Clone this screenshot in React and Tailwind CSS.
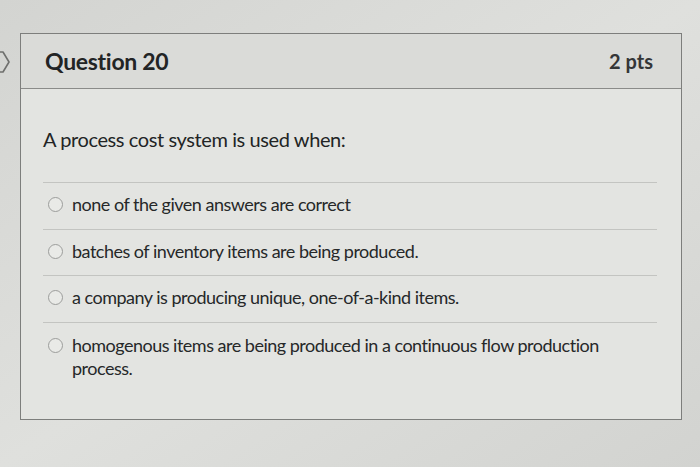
import { useState } from 'react'

const options = [
    'none of the given answers are correct',
    'batches of inventory items are being produced.',
    'a company is producing unique, one-of-a-kind items.',
    'homogenous items are being produced in a continuous flow production process.',
]

const Radio = ({ checked }) => (
    <span className="mt-[4px] h-[15px] w-[15px] shrink-0 rounded-full border-[1.5px] border-[#9c9d9b] bg-[#e9eae7] flex items-center justify-center">
        {checked && <span className="h-[7px] w-[7px] rounded-full bg-[#555]" />}
    </span>
)

const App = () => {
    const [picked, setPicked] = useState(null)

    return (
        <div
            className="h-[467px] w-[700px] overflow-hidden flex items-start pt-[33px] bg-gradient-to-br from-[#d3d4d1] via-[#dfe0dd] to-[#d2d3d0] text-[#222425]"
            style={{ fontFamily: 'Lato, "Open Sans", sans-serif' }}
        >
            {/* prev arrow, cut off at the left */}
            <svg className="mt-[17px] shrink-0" width="20" height="24" viewBox="0 0 20 24" fill="none">
                <path d="M-4 2 H3 L9 12 L3 22 H-4" stroke="#6f706e" strokeWidth="1.6" strokeLinejoin="round" />
            </svg>

            <div className="w-[662px] h-[387px] border-[1.5px] border-[#7d7e7c] bg-[#e3e4e1]">
                {/* Header */}
                <div className="h-[55px] flex items-center justify-between pl-[24px] pr-[28px] bg-[#dadbd8] border-b-[1.5px] border-[#8a8b89]">
                    <h2 className="text-[23px] font-bold tracking-[-0.3px]">Question 20</h2>
                    <span className="text-[20px] font-bold text-[#343637]">2 pts</span>
                </div>

                {/* Body */}
                <div className="pl-[22px] pr-[24px] pt-[38px]">
                    <p className="text-[20px] leading-[24px] tracking-[-0.4px] mb-[31px]">A process cost system is used when:</p>

                    {options.map((text, i) => {
                        const last = i === options.length - 1
                        return (
                            <label
                                key={i}
                                onClick={() => setPicked(i)}
                                className={`flex items-start gap-[9px] pl-[5px] border-t-[1.5px] border-[#c3c4c1] cursor-pointer ${last ? 'pt-[11px]' : 'h-[46.5px] pt-[10px]'}`}
                            >
                                <Radio checked={picked === i} />
                                <span className={`text-[18px] leading-[23px] tracking-[-0.5px] text-[#262829] ${last ? 'max-w-[545px]' : ''}`}>{text}</span>
                            </label>
                        )
                    })}
                </div>
            </div>
        </div>
    )
}

export default App
